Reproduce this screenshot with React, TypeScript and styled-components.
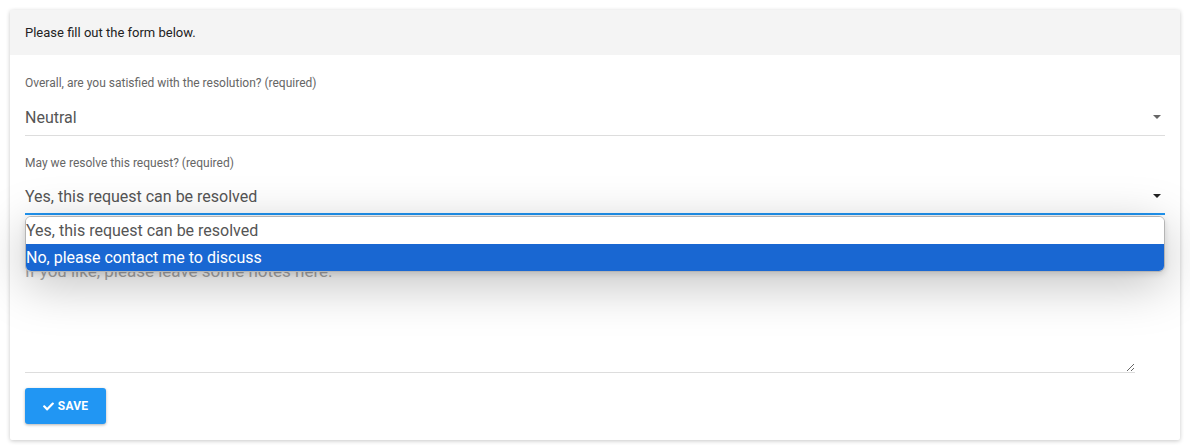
import React from "react";
import styled, { createGlobalStyle } from "styled-components";
import { FaCheck } from "react-icons/fa";

const GlobalStyle = createGlobalStyle`
  html, body { margin: 0; padding: 0; background: #fff; }
  body { font-family: Roboto, "Noto Sans", Arial, sans-serif; }
  * { box-sizing: border-box; }
`;

const Page = styled.div`
  padding: 10px;
`;

const Card = styled.div`
  width: 1170px;
  background: #fff;
  box-shadow: 0 1px 4px rgba(0, 0, 0, 0.22);
  border-radius: 2px;
`;

const Header = styled.div`
  height: 45px;
  display: flex;
  align-items: center;
  padding: 0 15px;
  background: #f4f4f4;
  font-size: 13px;
  color: #222;
`;

const Body = styled.div`
  padding: 20px 15px 16px;
  display: flex;
  flex-direction: column;
`;

const Field = styled.div<{ $gap?: number }>`
  position: relative;
  margin-bottom: ${(p) => p.$gap ?? 19}px;
`;

const Label = styled.div`
  font-size: 12px;
  line-height: 16px;
  color: #666;
  margin-bottom: 8px;
`;

const SelectBox = styled.div<{ $active?: boolean }>`
  height: ${(p) => (p.$active ? 36 : 37)}px;
  display: flex;
  align-items: center;
  justify-content: space-between;
  padding-right: 4px;
  font-size: 16px;
  color: #555;
  border-bottom: ${(p) => (p.$active ? "2px solid #2196f3" : "1px solid #ddd")};
`;

const Arrow = styled.span<{ $dark?: boolean }>`
  width: 0;
  height: 0;
  border-left: 4px solid transparent;
  border-right: 4px solid transparent;
  border-top: 4px solid ${(p) => (p.$dark ? "#222" : "#666")};
`;

const Menu = styled.div`
  position: absolute;
  left: 0;
  right: 0;
  top: 100%;
  margin-top: 1px;
  z-index: 10;
  background: #fff;
  border: 1px solid #b5b5b5;
  border-radius: 6px;
  overflow: hidden;
  box-shadow: 0 12px 50px rgba(0, 0, 0, 0.25), 0 2px 6px rgba(0, 0, 0, 0.12);
`;

const Option = styled.div<{ $selected?: boolean }>`
  height: 27px;
  display: flex;
  align-items: center;
  padding-left: 0;
  font-size: 16px;
  color: ${(p) => (p.$selected ? "#fff" : "#555")};
  background: ${(p) => (p.$selected ? "#1967d2" : "#fff")};
`;

const Notes = styled.textarea`
  display: block;
  width: 1110px;
  height: 117px;
  margin-top: 41px;
  padding: 5px 0;
  border: none;
  border-bottom: 1px solid #ddd;
  outline: none;
  resize: vertical;
  font-family: Roboto, "Noto Sans", Arial, sans-serif;
  font-size: 17px;
  line-height: 21px;
  color: #555;
  background: transparent;
  &::placeholder {
    color: #aaa;
  }
`;

const Actions = styled.div`
  margin-top: 15px;
  display: flex;
`;

const SaveButton = styled.button`
  height: 36px;
  width: 81px;
  display: flex;
  align-items: center;
  justify-content: center;
  gap: 4px;
  border: none;
  border-radius: 3px;
  background: #2196f3;
  color: #fff;
  font-family: Roboto, "Noto Sans", Arial, sans-serif;
  font-size: 12px;
  font-weight: 700;
  letter-spacing: 0.2px;
  box-shadow: 0 1px 3px rgba(0, 0, 0, 0.3);
  padding: 0;
  svg {
    width: 11px;
    height: 11px;
  }
`;

export default function App() {
  return (
    <>
      <GlobalStyle />
      <Page>
        <Card>
          <Header>Please fill out the form below.</Header>
          <Body>
            <Field>
              <Label>Overall, are you satisfied with the resolution? (required)</Label>
              <SelectBox>
                <span>Neutral</span>
                <Arrow />
              </SelectBox>
            </Field>
            <Field $gap={0}>
              <Label>May we resolve this request? (required)</Label>
              <SelectBox $active>
                <span>Yes, this request can be resolved</span>
                <Arrow $dark />
              </SelectBox>
              <Menu>
                <Option>Yes, this request can be resolved</Option>
                <Option $selected>No, please contact me to discuss</Option>
              </Menu>
            </Field>
            <Notes placeholder="If you like, please leave some notes here." />
            <Actions>
              <SaveButton>
                <FaCheck />
                SAVE
              </SaveButton>
            </Actions>
          </Body>
        </Card>
      </Page>
    </>
  );
}
